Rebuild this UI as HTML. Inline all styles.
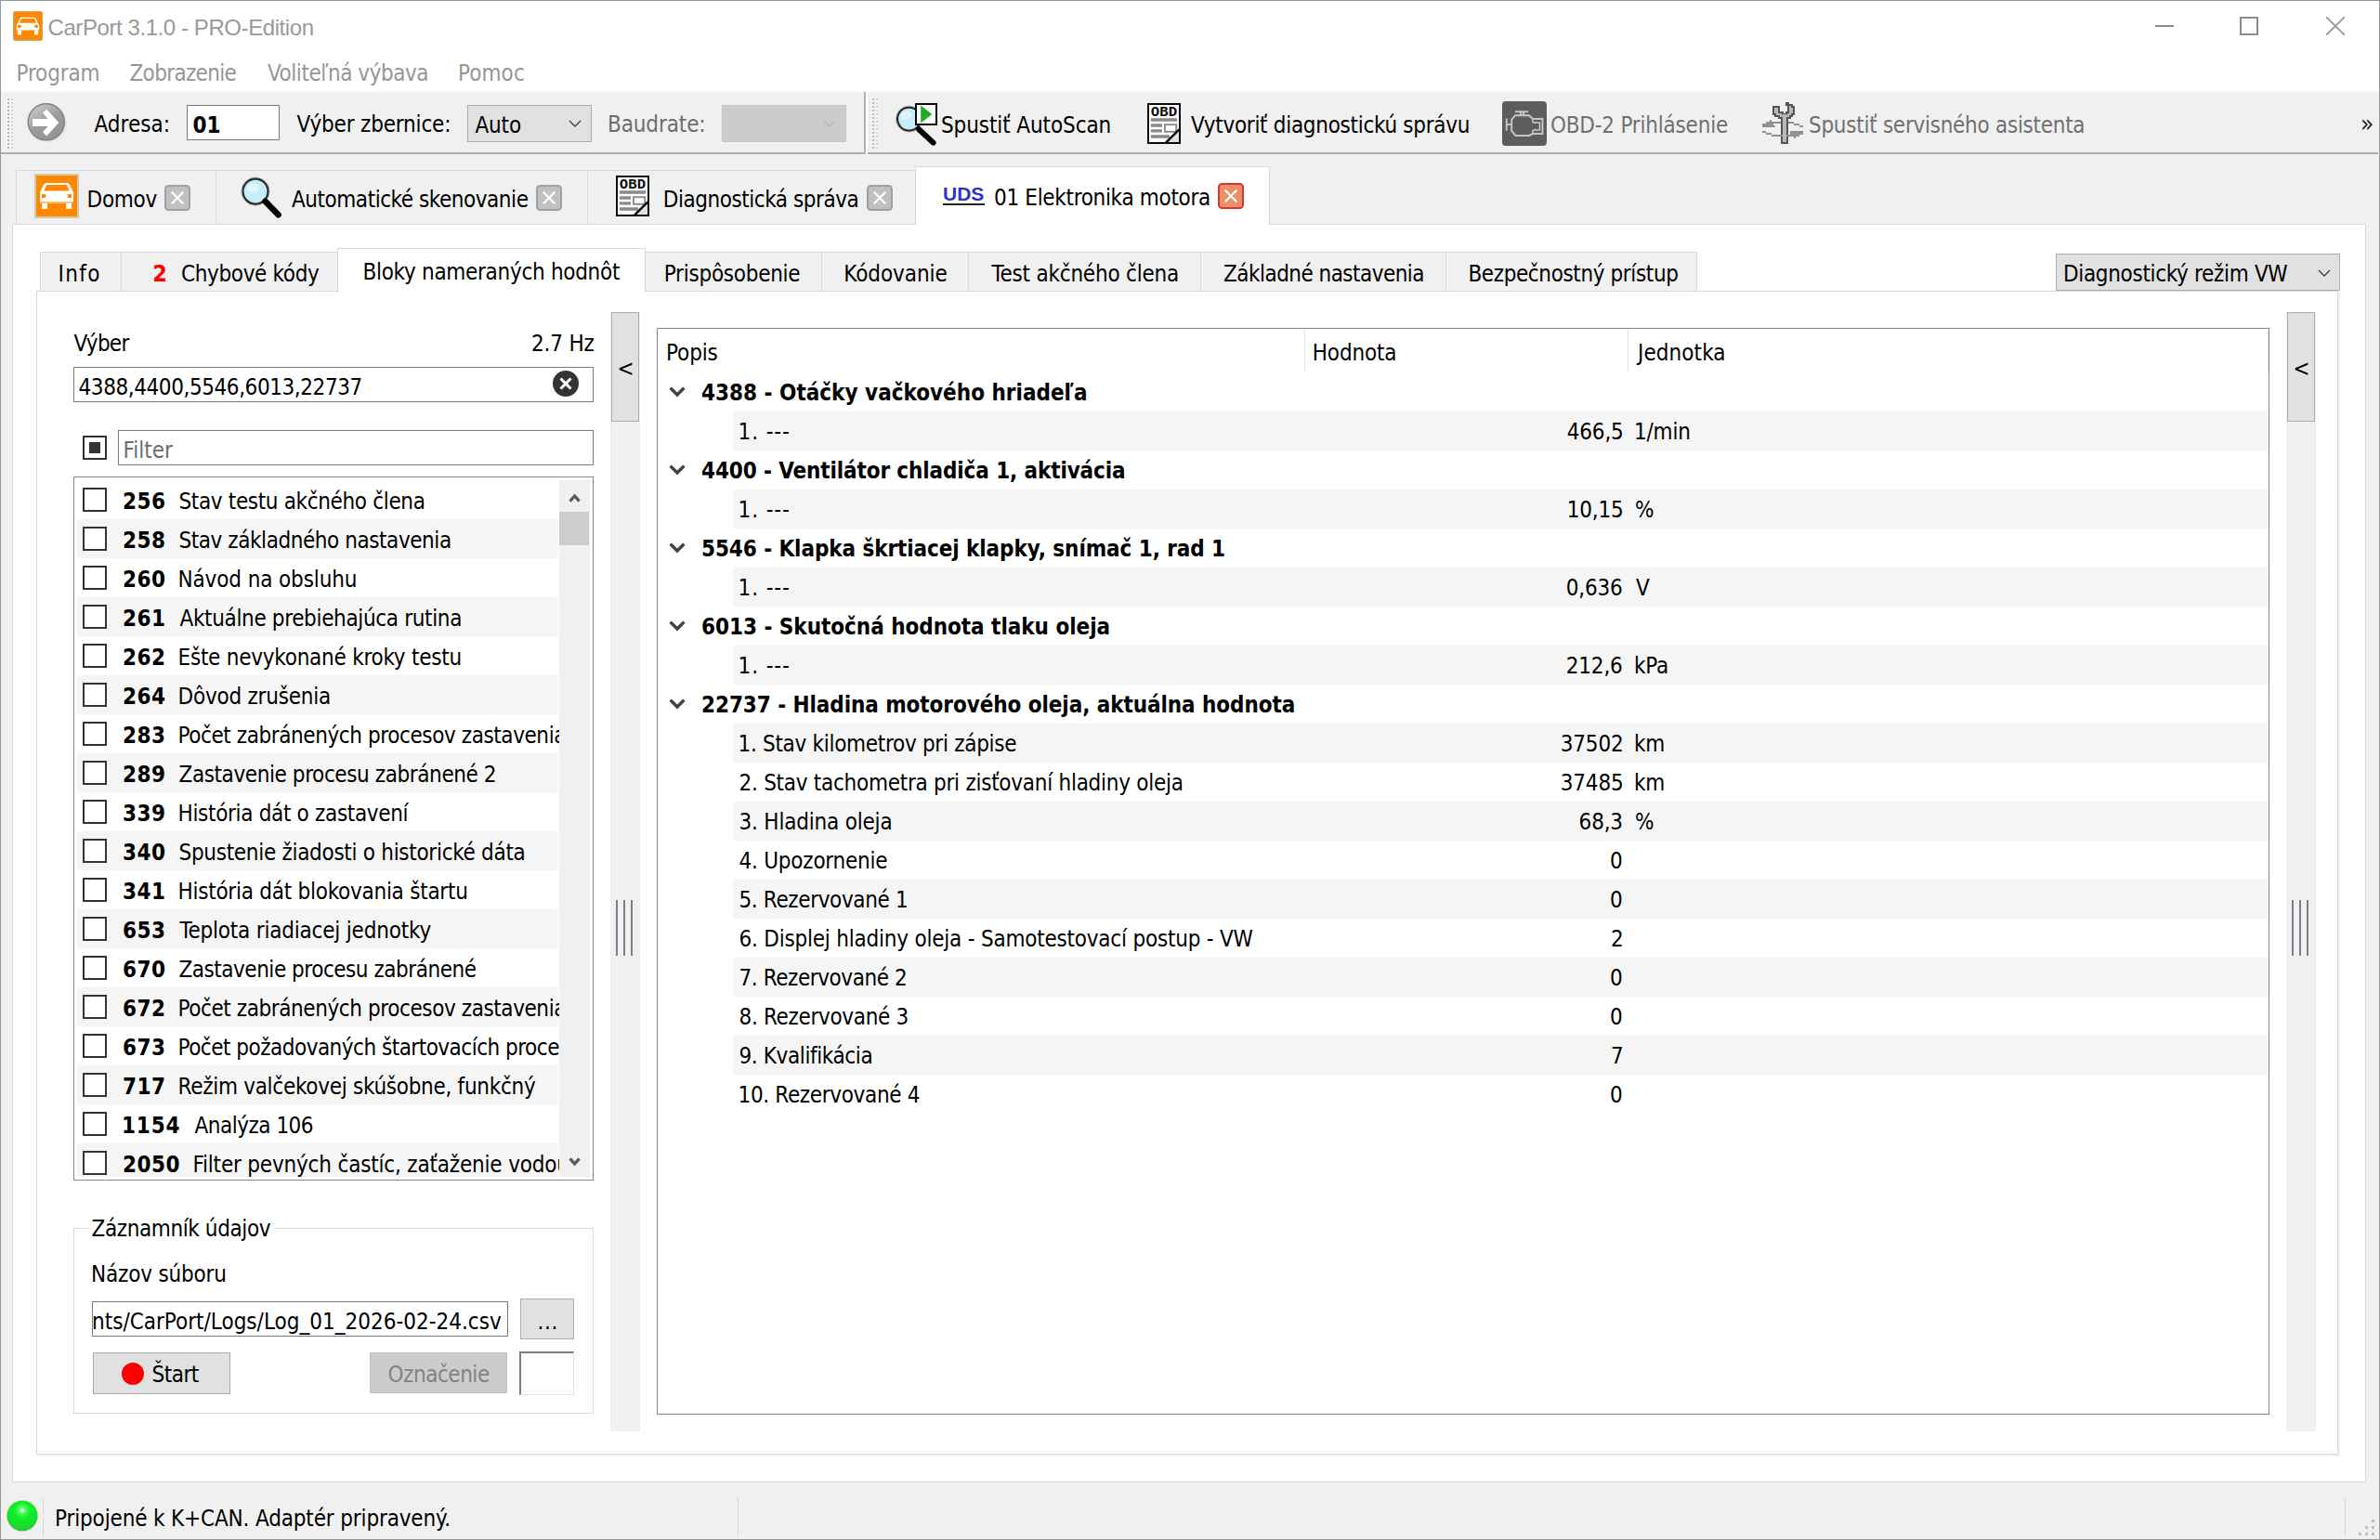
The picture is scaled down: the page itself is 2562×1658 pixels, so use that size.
<!DOCTYPE html>
<html lang="sk"><head><meta charset="utf-8"><title>CarPort 3.1.0 - PRO-Edition</title>
<style>
html,body{margin:0;padding:0;background:#fff;}
body{width:2562px;height:1658px;position:relative;overflow:hidden;font-family:'DejaVu Sans Condensed','Liberation Sans',sans-serif;font-size:24px;}
#app section{position:absolute;left:0;top:0;width:0;height:0;}
#app div,#app svg{position:absolute;box-sizing:border-box;}
.t{position:absolute;white-space:pre;line-height:30px;height:30px;}
</style></head><body><div id="app">
<section id="window-bg">
<div style="left:0px;top:0px;width:2562px;height:1658px;background:#fff;"></div>
<div style="left:0px;top:98px;width:2562px;height:2px;background:#f9f9f9;"></div>
<div style="left:0px;top:100px;width:2562px;height:1558px;background:#f0f0f0;"></div>
<div style="left:0px;top:164px;width:2560px;height:2px;background:#adadad;"></div>
<div style="left:930px;top:99px;width:2px;height:67px;background:#b0b0b0;"></div>
<div style="left:932px;top:99px;width:2px;height:67px;background:#fff;"></div>
</section>
<section id="titlebar">
<svg style="left:14px;top:12px" width="32" height="32" viewBox="0 0 32 32" ><rect x="0.5" y="0.5" width="31" height="31" rx="1.5" fill="#ff8800" stroke="#c9a27a" stroke-width="1"/><path d="M5 20.6 Q3.8 20.6 3.8 19.4 V16.2 Q3.8 14.4 5 13.6 L7.3 8 Q7.8 6.8 9.2 6.8 H22.8 Q24.2 6.8 24.7 8 L27 13.6 Q28.2 14.4 28.2 16.2 V19.4 Q28.2 20.6 27 20.6 Z" fill="#fff"/><path d="M6.9 12.8 L8.9 8.1 H23.1 L25.1 12.8 Z" fill="#ff8800"/><rect x="4.8" y="20.6" width="4.2" height="5" rx="0.8" fill="#fff"/><rect x="23" y="20.6" width="4.2" height="5" rx="0.8" fill="#fff"/><circle cx="6.9" cy="16.3" r="1.9" fill="#ff8800"/><circle cx="25" cy="16.3" r="1.9" fill="#ff8800"/></svg>
<span class="t" style="left:51.5px;top:15px;font-family:'Liberation Sans',sans-serif;font-size:24px;font-weight:normal;color:#999;letter-spacing:-0.42px;">CarPort 3.1.0 - PRO-Edition</span>
<div style="left:2320px;top:27px;width:20px;height:2px;background:#8c8c8c;"></div>
<div style="left:2411px;top:18px;width:20px;height:20px;border:2px solid #8c8c8c;"></div>
<svg style="left:2503px;top:17px" width="22" height="22" viewBox="0 0 22 22" ><path d="M1.3 1.3 L20.7 20.7 M20.7 1.3 L1.3 20.7" stroke="#969696" stroke-width="1.8" fill="none"/></svg>
</section>
<section id="menubar">
<span class="t" style="left:17.5px;top:64px;font-family:'DejaVu Sans Condensed','Liberation Sans',sans-serif;font-size:24px;font-weight:normal;color:#969696;letter-spacing:-0.17px;">Program</span>
<span class="t" style="left:139.5px;top:64px;font-family:'DejaVu Sans Condensed','Liberation Sans',sans-serif;font-size:24px;font-weight:normal;color:#969696;letter-spacing:-0.67px;">Zobrazenie</span>
<span class="t" style="left:288.1px;top:64px;font-family:'DejaVu Sans Condensed','Liberation Sans',sans-serif;font-size:24px;font-weight:normal;color:#969696;letter-spacing:-0.45px;">Voliteľná výbava</span>
<span class="t" style="left:493.0px;top:64px;font-family:'DejaVu Sans Condensed','Liberation Sans',sans-serif;font-size:24px;font-weight:normal;color:#969696;letter-spacing:0.07px;">Pomoc</span>
</section>
<section id="toolbar-address">
<svg style="left:6.5px;top:104.5px" width="8" height="57" viewBox="0 0 8 57" ><rect x="0" y="0" width="2.2" height="2.2" fill="#fff"/><rect x="1" y="1" width="1.7" height="1.7" fill="#a2a2a2"/><rect x="4.6" y="0" width="1.8" height="2.2" fill="#fff"/><rect x="5.4" y="1" width="1.2" height="1.5" fill="#adadad"/><rect x="0" y="4" width="2.2" height="2.2" fill="#fff"/><rect x="1" y="5" width="1.7" height="1.7" fill="#a2a2a2"/><rect x="4.6" y="4" width="1.8" height="2.2" fill="#fff"/><rect x="5.4" y="5" width="1.2" height="1.5" fill="#adadad"/><rect x="0" y="8" width="2.2" height="2.2" fill="#fff"/><rect x="1" y="9" width="1.7" height="1.7" fill="#a2a2a2"/><rect x="4.6" y="8" width="1.8" height="2.2" fill="#fff"/><rect x="5.4" y="9" width="1.2" height="1.5" fill="#adadad"/><rect x="0" y="12" width="2.2" height="2.2" fill="#fff"/><rect x="1" y="13" width="1.7" height="1.7" fill="#a2a2a2"/><rect x="4.6" y="12" width="1.8" height="2.2" fill="#fff"/><rect x="5.4" y="13" width="1.2" height="1.5" fill="#adadad"/><rect x="0" y="16" width="2.2" height="2.2" fill="#fff"/><rect x="1" y="17" width="1.7" height="1.7" fill="#a2a2a2"/><rect x="4.6" y="16" width="1.8" height="2.2" fill="#fff"/><rect x="5.4" y="17" width="1.2" height="1.5" fill="#adadad"/><rect x="0" y="20" width="2.2" height="2.2" fill="#fff"/><rect x="1" y="21" width="1.7" height="1.7" fill="#a2a2a2"/><rect x="4.6" y="20" width="1.8" height="2.2" fill="#fff"/><rect x="5.4" y="21" width="1.2" height="1.5" fill="#adadad"/><rect x="0" y="24" width="2.2" height="2.2" fill="#fff"/><rect x="1" y="25" width="1.7" height="1.7" fill="#a2a2a2"/><rect x="4.6" y="24" width="1.8" height="2.2" fill="#fff"/><rect x="5.4" y="25" width="1.2" height="1.5" fill="#adadad"/><rect x="0" y="28" width="2.2" height="2.2" fill="#fff"/><rect x="1" y="29" width="1.7" height="1.7" fill="#a2a2a2"/><rect x="4.6" y="28" width="1.8" height="2.2" fill="#fff"/><rect x="5.4" y="29" width="1.2" height="1.5" fill="#adadad"/><rect x="0" y="32" width="2.2" height="2.2" fill="#fff"/><rect x="1" y="33" width="1.7" height="1.7" fill="#a2a2a2"/><rect x="4.6" y="32" width="1.8" height="2.2" fill="#fff"/><rect x="5.4" y="33" width="1.2" height="1.5" fill="#adadad"/><rect x="0" y="36" width="2.2" height="2.2" fill="#fff"/><rect x="1" y="37" width="1.7" height="1.7" fill="#a2a2a2"/><rect x="4.6" y="36" width="1.8" height="2.2" fill="#fff"/><rect x="5.4" y="37" width="1.2" height="1.5" fill="#adadad"/><rect x="0" y="40" width="2.2" height="2.2" fill="#fff"/><rect x="1" y="41" width="1.7" height="1.7" fill="#a2a2a2"/><rect x="4.6" y="40" width="1.8" height="2.2" fill="#fff"/><rect x="5.4" y="41" width="1.2" height="1.5" fill="#adadad"/><rect x="0" y="44" width="2.2" height="2.2" fill="#fff"/><rect x="1" y="45" width="1.7" height="1.7" fill="#a2a2a2"/><rect x="4.6" y="44" width="1.8" height="2.2" fill="#fff"/><rect x="5.4" y="45" width="1.2" height="1.5" fill="#adadad"/><rect x="0" y="48" width="2.2" height="2.2" fill="#fff"/><rect x="1" y="49" width="1.7" height="1.7" fill="#a2a2a2"/><rect x="4.6" y="48" width="1.8" height="2.2" fill="#fff"/><rect x="5.4" y="49" width="1.2" height="1.5" fill="#adadad"/><rect x="0" y="52" width="2.2" height="2.2" fill="#fff"/><rect x="1" y="53" width="1.7" height="1.7" fill="#a2a2a2"/><rect x="4.6" y="52" width="1.8" height="2.2" fill="#fff"/><rect x="5.4" y="53" width="1.2" height="1.5" fill="#adadad"/></svg>
<svg style="left:938px;top:104.5px" width="8" height="57" viewBox="0 0 8 57" ><rect x="0" y="0" width="2.2" height="2.2" fill="#fff"/><rect x="1" y="1" width="1.7" height="1.7" fill="#a2a2a2"/><rect x="4.6" y="0" width="1.8" height="2.2" fill="#fff"/><rect x="5.4" y="1" width="1.2" height="1.5" fill="#adadad"/><rect x="0" y="4" width="2.2" height="2.2" fill="#fff"/><rect x="1" y="5" width="1.7" height="1.7" fill="#a2a2a2"/><rect x="4.6" y="4" width="1.8" height="2.2" fill="#fff"/><rect x="5.4" y="5" width="1.2" height="1.5" fill="#adadad"/><rect x="0" y="8" width="2.2" height="2.2" fill="#fff"/><rect x="1" y="9" width="1.7" height="1.7" fill="#a2a2a2"/><rect x="4.6" y="8" width="1.8" height="2.2" fill="#fff"/><rect x="5.4" y="9" width="1.2" height="1.5" fill="#adadad"/><rect x="0" y="12" width="2.2" height="2.2" fill="#fff"/><rect x="1" y="13" width="1.7" height="1.7" fill="#a2a2a2"/><rect x="4.6" y="12" width="1.8" height="2.2" fill="#fff"/><rect x="5.4" y="13" width="1.2" height="1.5" fill="#adadad"/><rect x="0" y="16" width="2.2" height="2.2" fill="#fff"/><rect x="1" y="17" width="1.7" height="1.7" fill="#a2a2a2"/><rect x="4.6" y="16" width="1.8" height="2.2" fill="#fff"/><rect x="5.4" y="17" width="1.2" height="1.5" fill="#adadad"/><rect x="0" y="20" width="2.2" height="2.2" fill="#fff"/><rect x="1" y="21" width="1.7" height="1.7" fill="#a2a2a2"/><rect x="4.6" y="20" width="1.8" height="2.2" fill="#fff"/><rect x="5.4" y="21" width="1.2" height="1.5" fill="#adadad"/><rect x="0" y="24" width="2.2" height="2.2" fill="#fff"/><rect x="1" y="25" width="1.7" height="1.7" fill="#a2a2a2"/><rect x="4.6" y="24" width="1.8" height="2.2" fill="#fff"/><rect x="5.4" y="25" width="1.2" height="1.5" fill="#adadad"/><rect x="0" y="28" width="2.2" height="2.2" fill="#fff"/><rect x="1" y="29" width="1.7" height="1.7" fill="#a2a2a2"/><rect x="4.6" y="28" width="1.8" height="2.2" fill="#fff"/><rect x="5.4" y="29" width="1.2" height="1.5" fill="#adadad"/><rect x="0" y="32" width="2.2" height="2.2" fill="#fff"/><rect x="1" y="33" width="1.7" height="1.7" fill="#a2a2a2"/><rect x="4.6" y="32" width="1.8" height="2.2" fill="#fff"/><rect x="5.4" y="33" width="1.2" height="1.5" fill="#adadad"/><rect x="0" y="36" width="2.2" height="2.2" fill="#fff"/><rect x="1" y="37" width="1.7" height="1.7" fill="#a2a2a2"/><rect x="4.6" y="36" width="1.8" height="2.2" fill="#fff"/><rect x="5.4" y="37" width="1.2" height="1.5" fill="#adadad"/><rect x="0" y="40" width="2.2" height="2.2" fill="#fff"/><rect x="1" y="41" width="1.7" height="1.7" fill="#a2a2a2"/><rect x="4.6" y="40" width="1.8" height="2.2" fill="#fff"/><rect x="5.4" y="41" width="1.2" height="1.5" fill="#adadad"/><rect x="0" y="44" width="2.2" height="2.2" fill="#fff"/><rect x="1" y="45" width="1.7" height="1.7" fill="#a2a2a2"/><rect x="4.6" y="44" width="1.8" height="2.2" fill="#fff"/><rect x="5.4" y="45" width="1.2" height="1.5" fill="#adadad"/><rect x="0" y="48" width="2.2" height="2.2" fill="#fff"/><rect x="1" y="49" width="1.7" height="1.7" fill="#a2a2a2"/><rect x="4.6" y="48" width="1.8" height="2.2" fill="#fff"/><rect x="5.4" y="49" width="1.2" height="1.5" fill="#adadad"/><rect x="0" y="52" width="2.2" height="2.2" fill="#fff"/><rect x="1" y="53" width="1.7" height="1.7" fill="#a2a2a2"/><rect x="4.6" y="52" width="1.8" height="2.2" fill="#fff"/><rect x="5.4" y="53" width="1.2" height="1.5" fill="#adadad"/></svg>
<svg style="left:26px;top:106px" width="50" height="52" viewBox="0 0 50 52" ><defs><linearGradient id="ga" x1="0.15" y1="0.1" x2="0.7" y2="0.9"><stop offset="0" stop-color="#c6c6c6"/><stop offset="0.55" stop-color="#9c9c9c"/><stop offset="1" stop-color="#949494"/></linearGradient>
<filter id="fb" x="-20%" y="-20%" width="140%" height="140%"><feGaussianBlur stdDeviation="1.2"/></filter></defs>
<circle cx="24.8" cy="26.6" r="19.6" fill="#bdbdbd" opacity=".55" filter="url(#fb)"/>
<circle cx="23.8" cy="25.3" r="19.6" fill="url(#ga)" stroke="#828282" stroke-width="1.4"/>
<path d="M9 21.9 H25.4 L20 15.3 L24.2 11.7 L37.3 25.9 L24.2 40.4 L20 36.2 L25.4 30.1 H9 Z" fill="#fff"/></svg>
<span class="t" style="left:101.5px;top:119px;font-family:'DejaVu Sans Condensed','Liberation Sans',sans-serif;font-size:24px;font-weight:normal;color:#000;letter-spacing:0.0px;">Adresa:</span>
<div style="left:201px;top:113px;width:100px;height:38px;background:#fff;border:1px solid #7a7a7a;"></div>
<span class="t" style="left:207.5px;top:120px;font-family:'DejaVu Sans Condensed','Liberation Sans',sans-serif;font-size:24px;font-weight:bold;color:#000;letter-spacing:0.0px;">01</span>
<span class="t" style="left:319.5px;top:119px;font-family:'DejaVu Sans Condensed','Liberation Sans',sans-serif;font-size:24px;font-weight:normal;color:#000;letter-spacing:-0.18px;">Výber zbernice:</span>
<div style="left:503px;top:113px;width:134px;height:40px;background:#e1e1e1;border:1px solid #adadad;"></div>
<span class="t" style="left:511.5px;top:120px;font-family:'DejaVu Sans Condensed','Liberation Sans',sans-serif;font-size:24px;font-weight:normal;color:#000;letter-spacing:-0.17px;">Auto</span>
<svg style="left:612px;top:129px" width="14" height="9" viewBox="0 0 14 9" ><path d="M1 1 L7 7 L13 1" stroke="#404040" stroke-width="1.4" fill="none"/></svg>
<span class="t" style="left:654.0px;top:119px;font-family:'DejaVu Sans Condensed','Liberation Sans',sans-serif;font-size:24px;font-weight:normal;color:#6d6d6d;letter-spacing:-0.12px;">Baudrate:</span>
<div style="left:777px;top:113px;width:134px;height:40px;background:#cccccc;border:1px solid #c6c6c6;"></div>
<svg style="left:886px;top:129px" width="14" height="9" viewBox="0 0 14 9" ><path d="M1 1 L7 7 L13 1" stroke="#b5b5b5" stroke-width="1.4" fill="none"/></svg>
</section>
<section id="toolbar-actions">
<svg style="left:962px;top:109px" width="50" height="50" viewBox="0 0 50 50" ><circle cx="16.5" cy="19.1" r="12.5" fill="#c5eefa" stroke="#2a2a2a" stroke-width="2.3"/>
<circle cx="16.5" cy="19.1" r="14.2" fill="none" stroke="#9a9a9a" stroke-width="0.9" opacity=".55"/>
<ellipse cx="13.5" cy="15.5" rx="6" ry="4.6" fill="#fff" opacity=".45"/>
<path d="M27.2 30.3 L42.6 44.6" stroke="#050505" stroke-width="6" stroke-linecap="round"/>
<rect x="24" y="3" width="22" height="22" fill="#fff" stroke="#050505" stroke-width="2"/>
<path d="M29.2 4.4 L41.2 13.9 L29.2 23.4 Z" fill="#1faa22"/></svg>
<span class="t" style="left:1013.0px;top:120px;font-family:'DejaVu Sans Condensed','Liberation Sans',sans-serif;font-size:24px;font-weight:normal;color:#000;letter-spacing:-0.1px;">Spustiť AutoScan</span>
<svg style="left:1235px;top:111px" width="36" height="44" viewBox="0 0 36 44" ><rect x="1" y="1" width="34" height="42" fill="#fff" stroke="#0a0a0a" stroke-width="2"/>
<text x="18" y="13.9" font-family="'DejaVu Sans Mono','Liberation Mono',monospace" font-size="13.5" font-weight="bold" text-anchor="middle" fill="#111" textLength="28.5" lengthAdjust="spacingAndGlyphs">OBD</text>
<path d="M3.9 18 H32.1 M3.9 24 H16 M3.9 29.9 H16 M3.9 36 H24" stroke="#8a8a8a" stroke-width="3.4"/>
<rect x="19" y="23.2" width="12.2" height="7.6" fill="#fff" stroke="#8a8a8a" stroke-width="1.9"/>
<path d="M34 29 L21 42 H34 Z" fill="#e2e2e2"/>
<path d="M34.4 28.4 L20.2 42.4" stroke="#0a0a0a" stroke-width="2.4"/></svg>
<span class="t" style="left:1282.0px;top:120px;font-family:'DejaVu Sans Condensed','Liberation Sans',sans-serif;font-size:24px;font-weight:normal;color:#000;letter-spacing:-0.3px;">Vytvoriť diagnostickú správu</span>
<svg style="left:1617px;top:109px" width="48" height="48" viewBox="0 0 48 48" ><rect x="0" y="0" width="48" height="48" rx="4" fill="#5d5d5d"/>
<g fill="none" stroke="#c4c4c4" stroke-width="2">
<path d="M14 11.3 H28 M20 12 V15.2 M23 12 V15.2"/>
<path d="M33 19 L29 15.2 H14 L10.2 20 V32 L14.5 37 H29 L33 35"/>
<path d="M4.8 18.5 V31.8 M5.8 25 H10.2"/>
<path d="M33 19 H43.5 V35 H33"/>
<path d="M33 19 V23 M33 31 V35 M33 23 H36 M33 31 H36 M36 22 V24 M36 30 V32 M36 23 H40.5 V31 H36" stroke-width="1.6"/></g></svg>
<span class="t" style="left:1669.0px;top:120px;font-family:'DejaVu Sans Condensed','Liberation Sans',sans-serif;font-size:24px;font-weight:normal;color:#707070;letter-spacing:-0.22px;">OBD-2 Prihlásenie</span>
<svg style="left:1895px;top:109px" width="48" height="48" viewBox="0 0 48 48" ><g shape-rendering="crispEdges">
<rect x="22" y="16" width="8" height="30" fill="#555"/><rect x="24" y="14" width="4" height="30" fill="#b9b9b9"/>
<path d="M14 6 H20 V12 H24 V14 H28 V12 H30 V4 H28 V2 H30 V4 H34 V6 H36 V14 H34 V16 H32 V18 H20 V16 H16 V14 H14 Z" fill="#b9b9b9" stroke="#555" stroke-width="2" stroke-linejoin="miter"/>
<rect x="24" y="14" width="4" height="6" fill="#b9b9b9"/>
<g fill="#909090">
<rect x="2" y="24" width="12" height="4"/><rect x="6" y="22" width="16" height="2"/><rect x="10" y="20" width="2" height="2"/><rect x="2" y="26" width="14" height="2"/>
<rect x="30" y="22" width="6" height="2"/><rect x="36" y="24" width="6" height="2"/><rect x="42" y="26" width="4" height="2"/>
<rect x="2" y="32" width="4" height="2"/><rect x="6" y="34" width="6" height="2"/><rect x="12" y="36" width="30" height="2"/>
<rect x="32" y="32" width="14" height="4"/><rect x="36" y="38" width="2" height="2"/>
</g>
<rect x="24" y="22" width="4" height="22" fill="#b9b9b9"/></g></svg>
<span class="t" style="left:1947.0px;top:120px;font-family:'DejaVu Sans Condensed','Liberation Sans',sans-serif;font-size:24px;font-weight:normal;color:#707070;letter-spacing:-0.28px;">Spustiť servisného asistenta</span>
<span class="t" style="left:2541.0px;top:118px;font-family:'DejaVu Sans Condensed','Liberation Sans',sans-serif;font-size:26px;font-weight:normal;color:#222;letter-spacing:0px;">»</span>
</section>
<section id="document-tabs">
<div style="left:17px;top:183px;width:969px;height:59px;border:1px solid #d9d9d9;border-bottom:none;background:#f0f0f0;"></div>
<div style="left:232px;top:184px;width:1px;height:58px;background:#d9d9d9;"></div>
<div style="left:632px;top:184px;width:1px;height:58px;background:#d9d9d9;"></div>
<div style="left:13px;top:241px;width:2534px;height:1355px;background:#fff;border:1px solid #d9d9d9;"></div>
<div style="left:985px;top:179px;width:382px;height:64px;background:#fff;border:1px solid #d9d9d9;border-bottom:none;"></div>
<svg style="left:37px;top:187px" width="48" height="48" viewBox="0 0 48 48" ><rect x="0" y="0" width="48" height="48" fill="#d6c8b6"/><rect x="2" y="2" width="44" height="44" fill="#ff8800"/>
<path d="M12 9.9 H36 L38.2 12 L42 20 V30.1 H6.1 V20 L9.8 12 Z" fill="#fff"/>
<path d="M13.2 12 H34.8 L37.6 18.4 H10.4 Z" fill="#ff8800"/>
<rect x="8" y="22.1" width="4.2" height="3.9" fill="#ff8800"/><rect x="35.8" y="22.1" width="4.2" height="3.9" fill="#ff8800"/>
<rect x="6.1" y="30.1" width="35.9" height="1.7" fill="#fff" opacity=".5"/>
<rect x="8" y="31.8" width="5.9" height="6.2" fill="#fff"/><rect x="34.2" y="31.8" width="5.9" height="6.2" fill="#fff"/></svg>
<span class="t" style="left:93.5px;top:200px;font-family:'DejaVu Sans Condensed','Liberation Sans',sans-serif;font-size:24px;font-weight:normal;color:#000;letter-spacing:-0.25px;">Domov</span>
<svg style="left:177px;top:199px" width="28" height="28" viewBox="0 0 28 28" ><rect x="1" y="1" width="26" height="26" rx="3.5" fill="#c0c0c0" stroke="#a0a0a0" stroke-width="2"/><path d="M7.8 7.8 L20.2 20.2 M20.2 7.8 L7.8 20.2" stroke="#fff" stroke-width="2.2"/></svg>
<svg style="left:256px;top:188px" width="50" height="50" viewBox="0 0 50 50" ><circle cx="19" cy="18.1" r="13.6" fill="#c5eefa" stroke="#2e2e2e" stroke-width="2.4"/>
<circle cx="19" cy="18.1" r="15.2" fill="none" stroke="#9a9a9a" stroke-width="0.9" opacity=".6"/>
<ellipse cx="16.5" cy="14.5" rx="6.5" ry="5" fill="#fff" opacity=".45"/>
<path d="M29.5 28.8 L43.6 43.2" stroke="#050505" stroke-width="6.6" stroke-linecap="round"/></svg>
<span class="t" style="left:314.0px;top:200px;font-family:'DejaVu Sans Condensed','Liberation Sans',sans-serif;font-size:24px;font-weight:normal;color:#000;letter-spacing:-0.46px;">Automatické skenovanie</span>
<svg style="left:577px;top:199px" width="28" height="28" viewBox="0 0 28 28" ><rect x="1" y="1" width="26" height="26" rx="3.5" fill="#c0c0c0" stroke="#a0a0a0" stroke-width="2"/><path d="M7.8 7.8 L20.2 20.2 M20.2 7.8 L7.8 20.2" stroke="#fff" stroke-width="2.2"/></svg>
<svg style="left:663px;top:189px" width="36" height="44" viewBox="0 0 36 44" ><rect x="1" y="1" width="34" height="42" fill="#fff" stroke="#0a0a0a" stroke-width="2"/>
<text x="18" y="13.9" font-family="'DejaVu Sans Mono','Liberation Mono',monospace" font-size="13.5" font-weight="bold" text-anchor="middle" fill="#111" textLength="28.5" lengthAdjust="spacingAndGlyphs">OBD</text>
<path d="M3.9 18 H32.1 M3.9 24 H16 M3.9 29.9 H16 M3.9 36 H24" stroke="#8a8a8a" stroke-width="3.4"/>
<rect x="19" y="23.2" width="12.2" height="7.6" fill="#fff" stroke="#8a8a8a" stroke-width="1.9"/>
<path d="M34 29 L21 42 H34 Z" fill="#e2e2e2"/>
<path d="M34.4 28.4 L20.2 42.4" stroke="#0a0a0a" stroke-width="2.4"/></svg>
<span class="t" style="left:713.8px;top:200px;font-family:'DejaVu Sans Condensed','Liberation Sans',sans-serif;font-size:24px;font-weight:normal;color:#000;letter-spacing:-0.46px;">Diagnostická správa</span>
<svg style="left:933px;top:199px" width="28" height="28" viewBox="0 0 28 28" ><rect x="1" y="1" width="26" height="26" rx="3.5" fill="#c0c0c0" stroke="#a0a0a0" stroke-width="2"/><path d="M7.8 7.8 L20.2 20.2 M20.2 7.8 L7.8 20.2" stroke="#fff" stroke-width="2.2"/></svg>
<span class="t" style="left:1015.0px;top:194px;font-family:'Liberation Sans',sans-serif;font-size:21px;font-weight:bold;color:#2a35c8;letter-spacing:0.0px;">UDS</span>
<div style="left:1015px;top:219px;width:45px;height:2px;background:#222;"></div>
<span class="t" style="left:1070.0px;top:198px;font-family:'DejaVu Sans Condensed','Liberation Sans',sans-serif;font-size:24px;font-weight:normal;color:#000;letter-spacing:-0.32px;">01 Elektronika motora</span>
<svg style="left:1311px;top:197px" width="28" height="28" viewBox="0 0 28 28" ><rect x="1" y="1" width="26" height="26" rx="3.5" fill="#ea9069" stroke="#d9342b" stroke-width="2"/><path d="M7.8 7.8 L20.2 20.2 M20.2 7.8 L7.8 20.2" stroke="#fff" stroke-width="2.2"/></svg>
</section>
<section id="function-tabs">
<div style="left:43px;top:271px;width:1784px;height:43px;border:1px solid #d9d9d9;border-bottom:none;background:#f0f0f0;"></div>
<div style="left:130px;top:272px;width:1px;height:42px;background:#d9d9d9;"></div>
<div style="left:694px;top:272px;width:1px;height:42px;background:#d9d9d9;"></div>
<div style="left:884px;top:272px;width:1px;height:42px;background:#d9d9d9;"></div>
<div style="left:1042px;top:272px;width:1px;height:42px;background:#d9d9d9;"></div>
<div style="left:1292px;top:272px;width:1px;height:42px;background:#d9d9d9;"></div>
<div style="left:1556px;top:272px;width:1px;height:42px;background:#d9d9d9;"></div>
<div style="left:2517px;top:315px;width:2px;height:1253px;background:#f1f1f1;"></div>
<div style="left:41px;top:1566px;width:2478px;height:2px;background:#f1f1f1;"></div>
<div style="left:39px;top:313px;width:2478px;height:1253px;background:#fff;border:1px solid #d9d9d9;"></div>
<div style="left:363px;top:267px;width:332px;height:48px;background:#fff;border:1px solid #d9d9d9;border-bottom:none;"></div>
<span class="t" style="left:62.5px;top:280px;font-family:'DejaVu Sans Condensed','Liberation Sans',sans-serif;font-size:24px;font-weight:normal;color:#000;letter-spacing:1.33px;">Info</span>
<span class="t" style="left:164.3px;top:280px;font-family:'DejaVu Sans Condensed','Liberation Sans',sans-serif;font-size:25px;font-weight:bold;color:#f00;letter-spacing:0px;">2</span>
<span class="t" style="left:195.0px;top:280px;font-family:'DejaVu Sans Condensed','Liberation Sans',sans-serif;font-size:24px;font-weight:normal;color:#000;letter-spacing:-0.36px;">Chybové kódy</span>
<span class="t" style="left:390.5px;top:278px;font-family:'DejaVu Sans Condensed','Liberation Sans',sans-serif;font-size:24px;font-weight:normal;color:#000;letter-spacing:-0.3px;">Bloky nameraných hodnôt</span>
<span class="t" style="left:714.8px;top:280px;font-family:'DejaVu Sans Condensed','Liberation Sans',sans-serif;font-size:24px;font-weight:normal;color:#000;letter-spacing:-0.27px;">Prispôsobenie</span>
<span class="t" style="left:908.3px;top:280px;font-family:'DejaVu Sans Condensed','Liberation Sans',sans-serif;font-size:24px;font-weight:normal;color:#000;letter-spacing:-0.07px;">Kódovanie</span>
<span class="t" style="left:1067.6px;top:280px;font-family:'DejaVu Sans Condensed','Liberation Sans',sans-serif;font-size:24px;font-weight:normal;color:#000;letter-spacing:-0.22px;">Test akčného člena</span>
<span class="t" style="left:1317.1px;top:280px;font-family:'DejaVu Sans Condensed','Liberation Sans',sans-serif;font-size:24px;font-weight:normal;color:#000;letter-spacing:-0.54px;">Základné nastavenia</span>
<span class="t" style="left:1580.4px;top:280px;font-family:'DejaVu Sans Condensed','Liberation Sans',sans-serif;font-size:24px;font-weight:normal;color:#000;letter-spacing:-0.39px;">Bezpečnostný prístup</span>
<div style="left:2213px;top:273px;width:306px;height:40px;background:#e1e1e1;border:1px solid #adadad;"></div>
<span class="t" style="left:2221.0px;top:280px;font-family:'DejaVu Sans Condensed','Liberation Sans',sans-serif;font-size:24px;font-weight:normal;color:#000;letter-spacing:-0.33px;">Diagnostický režim VW</span>
<svg style="left:2495px;top:290px" width="14" height="9" viewBox="0 0 14 9" ><path d="M1 1 L7 7 L13 1" stroke="#404040" stroke-width="1.4" fill="none"/></svg>
</section>
<section id="selection-pane">
<span class="t" style="left:79.5px;top:355px;font-family:'DejaVu Sans Condensed','Liberation Sans',sans-serif;font-size:24px;font-weight:normal;color:#000;letter-spacing:-0.75px;">Výber</span>
<span class="t" style="left:572.0px;top:355px;font-family:'DejaVu Sans Condensed','Liberation Sans',sans-serif;font-size:24px;font-weight:normal;color:#000;letter-spacing:-0.2px;">2.7 Hz</span>
<div style="left:79px;top:395px;width:560px;height:38px;background:#fff;border:1px solid #7a7a7a;"></div>
<span class="t" style="left:84.5px;top:402px;font-family:'DejaVu Sans Condensed','Liberation Sans',sans-serif;font-size:24px;font-weight:normal;color:#000;letter-spacing:-0.42px;">4388,4400,5546,6013,22737</span>
<svg style="left:595px;top:399px" width="28" height="28" viewBox="0 0 28 28" ><circle cx="14" cy="14" r="14" fill="#333"/><path d="M8.5 8.5 L19.5 19.5 M19.5 8.5 L8.5 19.5" stroke="#fff" stroke-width="3"/></svg>
<div style="left:657px;top:336px;width:32px;height:1205px;background:#f0f0f0;"></div>
<div style="left:658px;top:336px;width:30px;height:118px;background:#e1e1e1;border:1px solid #adadad;"></div>
<span class="t" style="left:664.5px;top:382px;font-family:'DejaVu Sans Condensed','Liberation Sans',sans-serif;font-size:24px;font-weight:normal;color:#000;letter-spacing:-0.2px;">&lt;</span>
<div style="left:663px;top:969px;width:2px;height:60px;background:#7a808c;"></div>
<div style="left:671px;top:969px;width:2px;height:60px;background:#7a808c;"></div>
<div style="left:679px;top:969px;width:2px;height:60px;background:#7a808c;"></div>
<div style="left:2461px;top:336px;width:32px;height:1205px;background:#f0f0f0;"></div>
<div style="left:2462px;top:336px;width:30px;height:118px;background:#e1e1e1;border:1px solid #adadad;"></div>
<span class="t" style="left:2468.5px;top:382px;font-family:'DejaVu Sans Condensed','Liberation Sans',sans-serif;font-size:24px;font-weight:normal;color:#000;letter-spacing:-0.2px;">&lt;</span>
<div style="left:2467px;top:969px;width:2px;height:60px;background:#7a808c;"></div>
<div style="left:2475px;top:969px;width:2px;height:60px;background:#7a808c;"></div>
<div style="left:2483px;top:969px;width:2px;height:60px;background:#7a808c;"></div>
<div style="left:89px;top:469px;width:26px;height:26px;background:#fff;border:2px solid #333;"><div style="left:5px;top:5px;width:12px;height:12px;background:#333"></div></div>
<div style="left:127px;top:463px;width:512px;height:38px;background:#fff;border:1px solid #7a7a7a;"></div>
<span class="t" style="left:132.5px;top:470px;font-family:'DejaVu Sans Condensed','Liberation Sans',sans-serif;font-size:24px;font-weight:normal;color:#6d6d6d;letter-spacing:0.0px;">Filter</span>
</section>
<section id="block-list">
<div style="left:79px;top:513px;width:560px;height:758px;background:#fff;border:1px solid #828790;"></div>
<div style="left:89px;top:525px;width:26px;height:26px;background:#fff;border:2px solid #333;"></div>
<span class="t" style="left:132.0px;top:525px;font-family:'DejaVu Sans Condensed','Liberation Sans',sans-serif;font-size:24px;font-weight:bold;color:#000;letter-spacing:0.5px;">256</span>
<span class="t" style="left:192.5px;top:525px;font-family:'DejaVu Sans Condensed','Liberation Sans',sans-serif;font-size:24px;font-weight:normal;color:#000;letter-spacing:-0.35px;">Stav testu akčného člena</span>
<div style="left:83px;top:559px;width:518px;height:42px;background:#f5f5f5;"></div>
<div style="left:89px;top:567px;width:26px;height:26px;background:#fff;border:2px solid #333;"></div>
<span class="t" style="left:132.0px;top:567px;font-family:'DejaVu Sans Condensed','Liberation Sans',sans-serif;font-size:24px;font-weight:bold;color:#000;letter-spacing:0.5px;">258</span>
<span class="t" style="left:192.5px;top:567px;font-family:'DejaVu Sans Condensed','Liberation Sans',sans-serif;font-size:24px;font-weight:normal;color:#000;letter-spacing:-0.44px;">Stav základného nastavenia</span>
<div style="left:89px;top:609px;width:26px;height:26px;background:#fff;border:2px solid #333;"></div>
<span class="t" style="left:132.0px;top:609px;font-family:'DejaVu Sans Condensed','Liberation Sans',sans-serif;font-size:24px;font-weight:bold;color:#000;letter-spacing:0.5px;">260</span>
<span class="t" style="left:191.5px;top:609px;font-family:'DejaVu Sans Condensed','Liberation Sans',sans-serif;font-size:24px;font-weight:normal;color:#000;letter-spacing:-0.13px;">Návod na obsluhu</span>
<div style="left:83px;top:643px;width:518px;height:42px;background:#f5f5f5;"></div>
<div style="left:89px;top:651px;width:26px;height:26px;background:#fff;border:2px solid #333;"></div>
<span class="t" style="left:132.0px;top:651px;font-family:'DejaVu Sans Condensed','Liberation Sans',sans-serif;font-size:24px;font-weight:bold;color:#000;letter-spacing:0.5px;">261</span>
<span class="t" style="left:193.5px;top:651px;font-family:'DejaVu Sans Condensed','Liberation Sans',sans-serif;font-size:24px;font-weight:normal;color:#000;letter-spacing:-0.35px;">Aktuálne prebiehajúca rutina</span>
<div style="left:89px;top:693px;width:26px;height:26px;background:#fff;border:2px solid #333;"></div>
<span class="t" style="left:132.0px;top:693px;font-family:'DejaVu Sans Condensed','Liberation Sans',sans-serif;font-size:24px;font-weight:bold;color:#000;letter-spacing:0.5px;">262</span>
<span class="t" style="left:191.5px;top:693px;font-family:'DejaVu Sans Condensed','Liberation Sans',sans-serif;font-size:24px;font-weight:normal;color:#000;letter-spacing:-0.25px;">Ešte nevykonané kroky testu</span>
<div style="left:83px;top:727px;width:518px;height:42px;background:#f5f5f5;"></div>
<div style="left:89px;top:735px;width:26px;height:26px;background:#fff;border:2px solid #333;"></div>
<span class="t" style="left:132.0px;top:735px;font-family:'DejaVu Sans Condensed','Liberation Sans',sans-serif;font-size:24px;font-weight:bold;color:#000;letter-spacing:0.5px;">264</span>
<span class="t" style="left:191.5px;top:735px;font-family:'DejaVu Sans Condensed','Liberation Sans',sans-serif;font-size:24px;font-weight:normal;color:#000;letter-spacing:-0.23px;">Dôvod zrušenia</span>
<div style="left:89px;top:777px;width:26px;height:26px;background:#fff;border:2px solid #333;"></div>
<span class="t" style="left:132.0px;top:777px;font-family:'DejaVu Sans Condensed','Liberation Sans',sans-serif;font-size:24px;font-weight:bold;color:#000;letter-spacing:0.5px;">283</span>
<span class="t" style="left:191.5px;top:777px;font-family:'DejaVu Sans Condensed','Liberation Sans',sans-serif;font-size:24px;font-weight:normal;color:#000;letter-spacing:-0.42px;width:410px;overflow:hidden;">Počet zabránených procesov zastavenia</span>
<div style="left:83px;top:811px;width:518px;height:42px;background:#f5f5f5;"></div>
<div style="left:89px;top:819px;width:26px;height:26px;background:#fff;border:2px solid #333;"></div>
<span class="t" style="left:132.0px;top:819px;font-family:'DejaVu Sans Condensed','Liberation Sans',sans-serif;font-size:24px;font-weight:bold;color:#000;letter-spacing:0.5px;">289</span>
<span class="t" style="left:192.5px;top:819px;font-family:'DejaVu Sans Condensed','Liberation Sans',sans-serif;font-size:24px;font-weight:normal;color:#000;letter-spacing:-0.41px;">Zastavenie procesu zabránené 2</span>
<div style="left:89px;top:861px;width:26px;height:26px;background:#fff;border:2px solid #333;"></div>
<span class="t" style="left:132.0px;top:861px;font-family:'DejaVu Sans Condensed','Liberation Sans',sans-serif;font-size:24px;font-weight:bold;color:#000;letter-spacing:0.5px;">339</span>
<span class="t" style="left:191.5px;top:861px;font-family:'DejaVu Sans Condensed','Liberation Sans',sans-serif;font-size:24px;font-weight:normal;color:#000;letter-spacing:-0.33px;">História dát o zastavení</span>
<div style="left:83px;top:895px;width:518px;height:42px;background:#f5f5f5;"></div>
<div style="left:89px;top:903px;width:26px;height:26px;background:#fff;border:2px solid #333;"></div>
<span class="t" style="left:132.0px;top:903px;font-family:'DejaVu Sans Condensed','Liberation Sans',sans-serif;font-size:24px;font-weight:bold;color:#000;letter-spacing:0.5px;">340</span>
<span class="t" style="left:192.5px;top:903px;font-family:'DejaVu Sans Condensed','Liberation Sans',sans-serif;font-size:24px;font-weight:normal;color:#000;letter-spacing:-0.3px;">Spustenie žiadosti o historické dáta</span>
<div style="left:89px;top:945px;width:26px;height:26px;background:#fff;border:2px solid #333;"></div>
<span class="t" style="left:132.0px;top:945px;font-family:'DejaVu Sans Condensed','Liberation Sans',sans-serif;font-size:24px;font-weight:bold;color:#000;letter-spacing:0.5px;">341</span>
<span class="t" style="left:191.5px;top:945px;font-family:'DejaVu Sans Condensed','Liberation Sans',sans-serif;font-size:24px;font-weight:normal;color:#000;letter-spacing:-0.26px;">História dát blokovania štartu</span>
<div style="left:83px;top:979px;width:518px;height:42px;background:#f5f5f5;"></div>
<div style="left:89px;top:987px;width:26px;height:26px;background:#fff;border:2px solid #333;"></div>
<span class="t" style="left:132.0px;top:987px;font-family:'DejaVu Sans Condensed','Liberation Sans',sans-serif;font-size:24px;font-weight:bold;color:#000;letter-spacing:0.5px;">653</span>
<span class="t" style="left:193.5px;top:987px;font-family:'DejaVu Sans Condensed','Liberation Sans',sans-serif;font-size:24px;font-weight:normal;color:#000;letter-spacing:-0.2px;">Teplota riadiacej jednotky</span>
<div style="left:89px;top:1029px;width:26px;height:26px;background:#fff;border:2px solid #333;"></div>
<span class="t" style="left:132.0px;top:1029px;font-family:'DejaVu Sans Condensed','Liberation Sans',sans-serif;font-size:24px;font-weight:bold;color:#000;letter-spacing:0.5px;">670</span>
<span class="t" style="left:192.5px;top:1029px;font-family:'DejaVu Sans Condensed','Liberation Sans',sans-serif;font-size:24px;font-weight:normal;color:#000;letter-spacing:-0.48px;">Zastavenie procesu zabránené</span>
<div style="left:83px;top:1063px;width:518px;height:42px;background:#f5f5f5;"></div>
<div style="left:89px;top:1071px;width:26px;height:26px;background:#fff;border:2px solid #333;"></div>
<span class="t" style="left:132.0px;top:1071px;font-family:'DejaVu Sans Condensed','Liberation Sans',sans-serif;font-size:24px;font-weight:bold;color:#000;letter-spacing:0.5px;">672</span>
<span class="t" style="left:191.5px;top:1071px;font-family:'DejaVu Sans Condensed','Liberation Sans',sans-serif;font-size:24px;font-weight:normal;color:#000;letter-spacing:-0.42px;width:410px;overflow:hidden;">Počet zabránených procesov zastavenia</span>
<div style="left:89px;top:1113px;width:26px;height:26px;background:#fff;border:2px solid #333;"></div>
<span class="t" style="left:132.0px;top:1113px;font-family:'DejaVu Sans Condensed','Liberation Sans',sans-serif;font-size:24px;font-weight:bold;color:#000;letter-spacing:0.5px;">673</span>
<span class="t" style="left:191.5px;top:1113px;font-family:'DejaVu Sans Condensed','Liberation Sans',sans-serif;font-size:24px;font-weight:normal;color:#000;letter-spacing:-0.51px;width:410px;overflow:hidden;">Počet požadovaných štartovacích procesov</span>
<div style="left:83px;top:1147px;width:518px;height:42px;background:#f5f5f5;"></div>
<div style="left:89px;top:1155px;width:26px;height:26px;background:#fff;border:2px solid #333;"></div>
<span class="t" style="left:132.0px;top:1155px;font-family:'DejaVu Sans Condensed','Liberation Sans',sans-serif;font-size:24px;font-weight:bold;color:#000;letter-spacing:0.5px;">717</span>
<span class="t" style="left:191.5px;top:1155px;font-family:'DejaVu Sans Condensed','Liberation Sans',sans-serif;font-size:24px;font-weight:normal;color:#000;letter-spacing:-0.29px;">Režim valčekovej skúšobne, funkčný</span>
<div style="left:89px;top:1197px;width:26px;height:26px;background:#fff;border:2px solid #333;"></div>
<span class="t" style="left:131.0px;top:1197px;font-family:'DejaVu Sans Condensed','Liberation Sans',sans-serif;font-size:24px;font-weight:bold;color:#000;letter-spacing:0.83px;">1154</span>
<span class="t" style="left:209.5px;top:1197px;font-family:'DejaVu Sans Condensed','Liberation Sans',sans-serif;font-size:24px;font-weight:normal;color:#000;letter-spacing:-0.5px;">Analýza 106</span>
<div style="left:83px;top:1231px;width:518px;height:36px;background:#f5f5f5;"></div>
<div style="left:89px;top:1239px;width:26px;height:26px;background:#fff;border:2px solid #333;"></div>
<span class="t" style="left:132.0px;top:1239px;font-family:'DejaVu Sans Condensed','Liberation Sans',sans-serif;font-size:24px;font-weight:bold;color:#000;letter-spacing:0.5px;">2050</span>
<span class="t" style="left:207.5px;top:1239px;font-family:'DejaVu Sans Condensed','Liberation Sans',sans-serif;font-size:24px;font-weight:normal;color:#000;letter-spacing:-0.19px;width:394px;overflow:hidden;">Filter pevných častíc, zaťaženie vodou</span>
<div style="left:602px;top:517px;width:33px;height:750px;background:#f0f0f0;"></div>
<div style="left:602px;top:551px;width:32px;height:36px;background:#cdcdcd;"></div>
<svg style="left:611px;top:529px" width="16" height="13" viewBox="0 0 16 13" ><path d="M2.6 10.6 L7.6 5 L12.6 10.6" stroke="#5a5a5a" stroke-width="3.2" fill="none"/></svg>
<svg style="left:611px;top:1244.5px" width="16" height="13" viewBox="0 0 16 13" ><path d="M2.6 2.4 L7.6 8 L12.6 2.4" stroke="#5a5a5a" stroke-width="3.2" fill="none"/></svg>
</section>
<section id="logger-box">
<div style="left:79px;top:1322px;width:560px;height:200px;border:1px solid #dcdcdc;"></div>
<div style="left:95px;top:1308px;width:200px;height:28px;background:#fff;"></div>
<span class="t" style="left:98.5px;top:1308px;font-family:'DejaVu Sans Condensed','Liberation Sans',sans-serif;font-size:24px;font-weight:normal;color:#000;letter-spacing:-0.4px;">Záznamník údajov</span>
<span class="t" style="left:98.0px;top:1357px;font-family:'DejaVu Sans Condensed','Liberation Sans',sans-serif;font-size:24px;font-weight:normal;color:#000;letter-spacing:-0.18px;">Názov súboru</span>
<div style="left:99px;top:1401px;width:448px;height:38px;background:#fff;border:1px solid #7a7a7a;"></div>
<span class="t" style="left:99.0px;top:1408px;font-family:'DejaVu Sans Condensed','Liberation Sans',sans-serif;font-size:24px;font-weight:normal;color:#000;letter-spacing:0.0px;">nts/CarPort/Logs/Log_01_2026-02-24.csv</span>
<div style="left:560px;top:1398px;width:58px;height:44px;background:#e1e1e1;border:1px solid #adadad;"></div>
<span class="t" style="left:578.5px;top:1408px;font-family:'DejaVu Sans Condensed','Liberation Sans',sans-serif;font-size:24px;font-weight:normal;color:#000;letter-spacing:0.65px;">...</span>
<div style="left:100px;top:1456px;width:148px;height:45px;background:#e1e1e1;border:1px solid #adadad;"></div>
<div style="left:131px;top:1467px;width:24px;height:24px;background:#fb0000;border-radius:50%;"></div>
<span class="t" style="left:163.5px;top:1465px;font-family:'DejaVu Sans Condensed','Liberation Sans',sans-serif;font-size:24px;font-weight:normal;color:#000;letter-spacing:-0.5px;">Štart</span>
<div style="left:398px;top:1456px;width:148px;height:44px;background:#cccccc;border:1px solid #bfbfbf;"></div>
<span class="t" style="left:417.5px;top:1465px;font-family:'DejaVu Sans Condensed','Liberation Sans',sans-serif;font-size:24px;font-weight:normal;color:#838383;letter-spacing:-0.46px;">Označenie</span>
<div style="left:559px;top:1455px;width:59px;height:47px;background:#fff;border:1px solid #e3e3e3;border-left:2px solid #7d7d7d;border-top:2px solid #7d7d7d;"></div>
</section>
<section id="measured-values">
<div style="left:707px;top:353px;width:1736px;height:1170px;background:#fff;border:1px solid #828790;"></div>
<div style="left:1404px;top:355px;width:1px;height:46px;background:#e5e5e5;"></div>
<div style="left:1752px;top:355px;width:1px;height:46px;background:#e5e5e5;"></div>
<div style="left:2441px;top:355px;width:1px;height:46px;background:#e5e5e5;"></div>
<span class="t" style="left:717.0px;top:365px;font-family:'DejaVu Sans Condensed','Liberation Sans',sans-serif;font-size:24px;font-weight:normal;color:#000;letter-spacing:-0.12px;">Popis</span>
<span class="t" style="left:1412.8px;top:365px;font-family:'DejaVu Sans Condensed','Liberation Sans',sans-serif;font-size:24px;font-weight:normal;color:#000;letter-spacing:-0.17px;">Hodnota</span>
<span class="t" style="left:1763.0px;top:365px;font-family:'DejaVu Sans Condensed','Liberation Sans',sans-serif;font-size:24px;font-weight:normal;color:#000;letter-spacing:0.07px;">Jednotka</span>
<svg style="left:719px;top:415px" width="20" height="14" viewBox="0 0 20 14" ><path d="M2.6 2.6 L10 10 L17.4 2.6" stroke="#404040" stroke-width="3.4" fill="none"/></svg>
<span class="t" style="left:755.0px;top:408px;font-family:'DejaVu Sans Condensed','Liberation Sans',sans-serif;font-size:24px;font-weight:bold;color:#000;letter-spacing:0.0px;">4388 - Otáčky vačkového hriadeľa</span>
<div style="left:789px;top:443px;width:1652px;height:42px;background:#f5f5f5;"></div>
<span class="t" style="left:794.5px;top:450px;font-family:'DejaVu Sans Condensed','Liberation Sans',sans-serif;font-size:24px;font-weight:normal;color:#000;letter-spacing:0.9px;">1. ---</span>
<span class="t" style="left:1686.8px;top:450px;font-family:'DejaVu Sans Condensed','Liberation Sans',sans-serif;font-size:24px;font-weight:normal;color:#000;letter-spacing:-0.2px;">466,5</span>
<span class="t" style="left:1759.0px;top:450px;font-family:'DejaVu Sans Condensed','Liberation Sans',sans-serif;font-size:24px;font-weight:normal;color:#000;letter-spacing:-0.2px;">1/min</span>
<svg style="left:719px;top:499px" width="20" height="14" viewBox="0 0 20 14" ><path d="M2.6 2.6 L10 10 L17.4 2.6" stroke="#404040" stroke-width="3.4" fill="none"/></svg>
<span class="t" style="left:755.0px;top:492px;font-family:'DejaVu Sans Condensed','Liberation Sans',sans-serif;font-size:24px;font-weight:bold;color:#000;letter-spacing:-0.12px;">4400 - Ventilátor chladiča 1, aktivácia</span>
<div style="left:789px;top:527px;width:1652px;height:42px;background:#f5f5f5;"></div>
<span class="t" style="left:794.5px;top:534px;font-family:'DejaVu Sans Condensed','Liberation Sans',sans-serif;font-size:24px;font-weight:normal;color:#000;letter-spacing:0.9px;">1. ---</span>
<span class="t" style="left:1686.8px;top:534px;font-family:'DejaVu Sans Condensed','Liberation Sans',sans-serif;font-size:24px;font-weight:normal;color:#000;letter-spacing:-0.2px;">10,15</span>
<span class="t" style="left:1760.0px;top:534px;font-family:'DejaVu Sans Condensed','Liberation Sans',sans-serif;font-size:24px;font-weight:normal;color:#000;letter-spacing:-0.2px;">%</span>
<svg style="left:719px;top:583px" width="20" height="14" viewBox="0 0 20 14" ><path d="M2.6 2.6 L10 10 L17.4 2.6" stroke="#404040" stroke-width="3.4" fill="none"/></svg>
<span class="t" style="left:755.0px;top:576px;font-family:'DejaVu Sans Condensed','Liberation Sans',sans-serif;font-size:24px;font-weight:bold;color:#000;letter-spacing:-0.09px;">5546 - Klapka škrtiacej klapky, snímač 1, rad 1</span>
<div style="left:789px;top:611px;width:1652px;height:42px;background:#f5f5f5;"></div>
<span class="t" style="left:794.5px;top:618px;font-family:'DejaVu Sans Condensed','Liberation Sans',sans-serif;font-size:24px;font-weight:normal;color:#000;letter-spacing:0.9px;">1. ---</span>
<span class="t" style="left:1685.8px;top:618px;font-family:'DejaVu Sans Condensed','Liberation Sans',sans-serif;font-size:24px;font-weight:normal;color:#000;letter-spacing:-0.2px;">0,636</span>
<span class="t" style="left:1761.0px;top:618px;font-family:'DejaVu Sans Condensed','Liberation Sans',sans-serif;font-size:24px;font-weight:normal;color:#000;letter-spacing:-0.2px;">V</span>
<svg style="left:719px;top:667px" width="20" height="14" viewBox="0 0 20 14" ><path d="M2.6 2.6 L10 10 L17.4 2.6" stroke="#404040" stroke-width="3.4" fill="none"/></svg>
<span class="t" style="left:755.0px;top:660px;font-family:'DejaVu Sans Condensed','Liberation Sans',sans-serif;font-size:24px;font-weight:bold;color:#000;letter-spacing:-0.04px;">6013 - Skutočná hodnota tlaku oleja</span>
<div style="left:789px;top:695px;width:1652px;height:42px;background:#f5f5f5;"></div>
<span class="t" style="left:794.5px;top:702px;font-family:'DejaVu Sans Condensed','Liberation Sans',sans-serif;font-size:24px;font-weight:normal;color:#000;letter-spacing:0.9px;">1. ---</span>
<span class="t" style="left:1685.8px;top:702px;font-family:'DejaVu Sans Condensed','Liberation Sans',sans-serif;font-size:24px;font-weight:normal;color:#000;letter-spacing:-0.2px;">212,6</span>
<span class="t" style="left:1759.0px;top:702px;font-family:'DejaVu Sans Condensed','Liberation Sans',sans-serif;font-size:24px;font-weight:normal;color:#000;letter-spacing:-0.2px;">kPa</span>
<svg style="left:719px;top:751px" width="20" height="14" viewBox="0 0 20 14" ><path d="M2.6 2.6 L10 10 L17.4 2.6" stroke="#404040" stroke-width="3.4" fill="none"/></svg>
<span class="t" style="left:755.0px;top:744px;font-family:'DejaVu Sans Condensed','Liberation Sans',sans-serif;font-size:24px;font-weight:bold;color:#000;letter-spacing:-0.08px;">22737 - Hladina motorového oleja, aktuálna hodnota</span>
<div style="left:789px;top:779px;width:1652px;height:42px;background:#f5f5f5;"></div>
<span class="t" style="left:794.5px;top:786px;font-family:'DejaVu Sans Condensed','Liberation Sans',sans-serif;font-size:24px;font-weight:normal;color:#000;letter-spacing:-0.3px;">1. Stav kilometrov pri zápise</span>
<span class="t" style="left:1679.8px;top:786px;font-family:'DejaVu Sans Condensed','Liberation Sans',sans-serif;font-size:24px;font-weight:normal;color:#000;letter-spacing:-0.2px;">37502</span>
<span class="t" style="left:1759.0px;top:786px;font-family:'DejaVu Sans Condensed','Liberation Sans',sans-serif;font-size:24px;font-weight:normal;color:#000;letter-spacing:-0.2px;">km</span>
<span class="t" style="left:795.5px;top:828px;font-family:'DejaVu Sans Condensed','Liberation Sans',sans-serif;font-size:24px;font-weight:normal;color:#000;letter-spacing:-0.27px;">2. Stav tachometra pri zisťovaní hladiny oleja</span>
<span class="t" style="left:1679.8px;top:828px;font-family:'DejaVu Sans Condensed','Liberation Sans',sans-serif;font-size:24px;font-weight:normal;color:#000;letter-spacing:-0.2px;">37485</span>
<span class="t" style="left:1759.0px;top:828px;font-family:'DejaVu Sans Condensed','Liberation Sans',sans-serif;font-size:24px;font-weight:normal;color:#000;letter-spacing:-0.2px;">km</span>
<div style="left:789px;top:863px;width:1652px;height:42px;background:#f5f5f5;"></div>
<span class="t" style="left:795.5px;top:870px;font-family:'DejaVu Sans Condensed','Liberation Sans',sans-serif;font-size:24px;font-weight:normal;color:#000;letter-spacing:-0.2px;">3. Hladina oleja</span>
<span class="t" style="left:1699.6px;top:870px;font-family:'DejaVu Sans Condensed','Liberation Sans',sans-serif;font-size:24px;font-weight:normal;color:#000;letter-spacing:-0.2px;">68,3</span>
<span class="t" style="left:1760.0px;top:870px;font-family:'DejaVu Sans Condensed','Liberation Sans',sans-serif;font-size:24px;font-weight:normal;color:#000;letter-spacing:-0.2px;">%</span>
<span class="t" style="left:795.5px;top:912px;font-family:'DejaVu Sans Condensed','Liberation Sans',sans-serif;font-size:24px;font-weight:normal;color:#000;letter-spacing:-0.23px;">4. Upozornenie</span>
<span class="t" style="left:1733.0px;top:912px;font-family:'DejaVu Sans Condensed','Liberation Sans',sans-serif;font-size:24px;font-weight:normal;color:#000;letter-spacing:-0.2px;">0</span>
<div style="left:789px;top:947px;width:1652px;height:42px;background:#f5f5f5;"></div>
<span class="t" style="left:795.5px;top:954px;font-family:'DejaVu Sans Condensed','Liberation Sans',sans-serif;font-size:24px;font-weight:normal;color:#000;letter-spacing:-0.37px;">5. Rezervované 1</span>
<span class="t" style="left:1733.0px;top:954px;font-family:'DejaVu Sans Condensed','Liberation Sans',sans-serif;font-size:24px;font-weight:normal;color:#000;letter-spacing:-0.2px;">0</span>
<span class="t" style="left:795.5px;top:996px;font-family:'DejaVu Sans Condensed','Liberation Sans',sans-serif;font-size:24px;font-weight:normal;color:#000;letter-spacing:-0.22px;">6. Displej hladiny oleja - Samotestovací postup - VW</span>
<span class="t" style="left:1734.0px;top:996px;font-family:'DejaVu Sans Condensed','Liberation Sans',sans-serif;font-size:24px;font-weight:normal;color:#000;letter-spacing:-0.2px;">2</span>
<div style="left:789px;top:1031px;width:1652px;height:42px;background:#f5f5f5;"></div>
<span class="t" style="left:795.5px;top:1038px;font-family:'DejaVu Sans Condensed','Liberation Sans',sans-serif;font-size:24px;font-weight:normal;color:#000;letter-spacing:-0.43px;">7. Rezervované 2</span>
<span class="t" style="left:1733.0px;top:1038px;font-family:'DejaVu Sans Condensed','Liberation Sans',sans-serif;font-size:24px;font-weight:normal;color:#000;letter-spacing:-0.2px;">0</span>
<span class="t" style="left:795.5px;top:1080px;font-family:'DejaVu Sans Condensed','Liberation Sans',sans-serif;font-size:24px;font-weight:normal;color:#000;letter-spacing:-0.33px;">8. Rezervované 3</span>
<span class="t" style="left:1733.0px;top:1080px;font-family:'DejaVu Sans Condensed','Liberation Sans',sans-serif;font-size:24px;font-weight:normal;color:#000;letter-spacing:-0.2px;">0</span>
<div style="left:789px;top:1115px;width:1652px;height:42px;background:#f5f5f5;"></div>
<span class="t" style="left:795.5px;top:1122px;font-family:'DejaVu Sans Condensed','Liberation Sans',sans-serif;font-size:24px;font-weight:normal;color:#000;letter-spacing:-0.39px;">9. Kvalifikácia</span>
<span class="t" style="left:1734.0px;top:1122px;font-family:'DejaVu Sans Condensed','Liberation Sans',sans-serif;font-size:24px;font-weight:normal;color:#000;letter-spacing:-0.2px;">7</span>
<span class="t" style="left:794.5px;top:1164px;font-family:'DejaVu Sans Condensed','Liberation Sans',sans-serif;font-size:24px;font-weight:normal;color:#000;letter-spacing:-0.34px;">10. Rezervované 4</span>
<span class="t" style="left:1733.0px;top:1164px;font-family:'DejaVu Sans Condensed','Liberation Sans',sans-serif;font-size:24px;font-weight:normal;color:#000;letter-spacing:-0.2px;">0</span>
</section>
<section id="statusbar">
<svg style="left:5px;top:1613px" width="38" height="38" viewBox="0 0 38 38" ><defs><radialGradient id="gg" cx=".5" cy=".32" r=".62"><stop offset="0" stop-color="#d8ffd8"/><stop offset=".16" stop-color="#5cf76a"/><stop offset=".4" stop-color="#12f028"/><stop offset=".85" stop-color="#18dc2c"/><stop offset="1" stop-color="#2ec83e"/></radialGradient></defs>
<circle cx="19" cy="19" r="16.6" fill="url(#gg)"/></svg>
<div style="left:46px;top:1613px;width:1px;height:41px;background:#d7d7d7;"></div>
<div style="left:794px;top:1613px;width:1px;height:41px;background:#d7d7d7;"></div>
<div style="left:2524px;top:1613px;width:1px;height:41px;background:#d7d7d7;"></div>
<span class="t" style="left:59.0px;top:1620px;font-family:'DejaVu Sans Condensed','Liberation Sans',sans-serif;font-size:24px;font-weight:normal;color:#000;letter-spacing:-0.15px;">Pripojené k K+CAN. Adaptér pripravený.</span>
<svg style="left:2539px;top:1636px" width="17" height="17" viewBox="0 0 17 17" ><rect x="14" y="0" width="3" height="3" fill="#bdbdbd"/><rect x="7" y="7" width="3" height="3" fill="#bdbdbd"/><rect x="14" y="7" width="3" height="3" fill="#bdbdbd"/><rect x="0" y="14" width="3" height="3" fill="#bdbdbd"/><rect x="7" y="14" width="3" height="3" fill="#bdbdbd"/><rect x="14" y="14" width="3" height="3" fill="#bdbdbd"/></svg>
</section>
<section id="window-frame">
<div style="left:0px;top:0px;width:2562px;height:1658px;border:1px solid #96969b;pointer-events:none;"></div>
</section>
</div></body></html>
